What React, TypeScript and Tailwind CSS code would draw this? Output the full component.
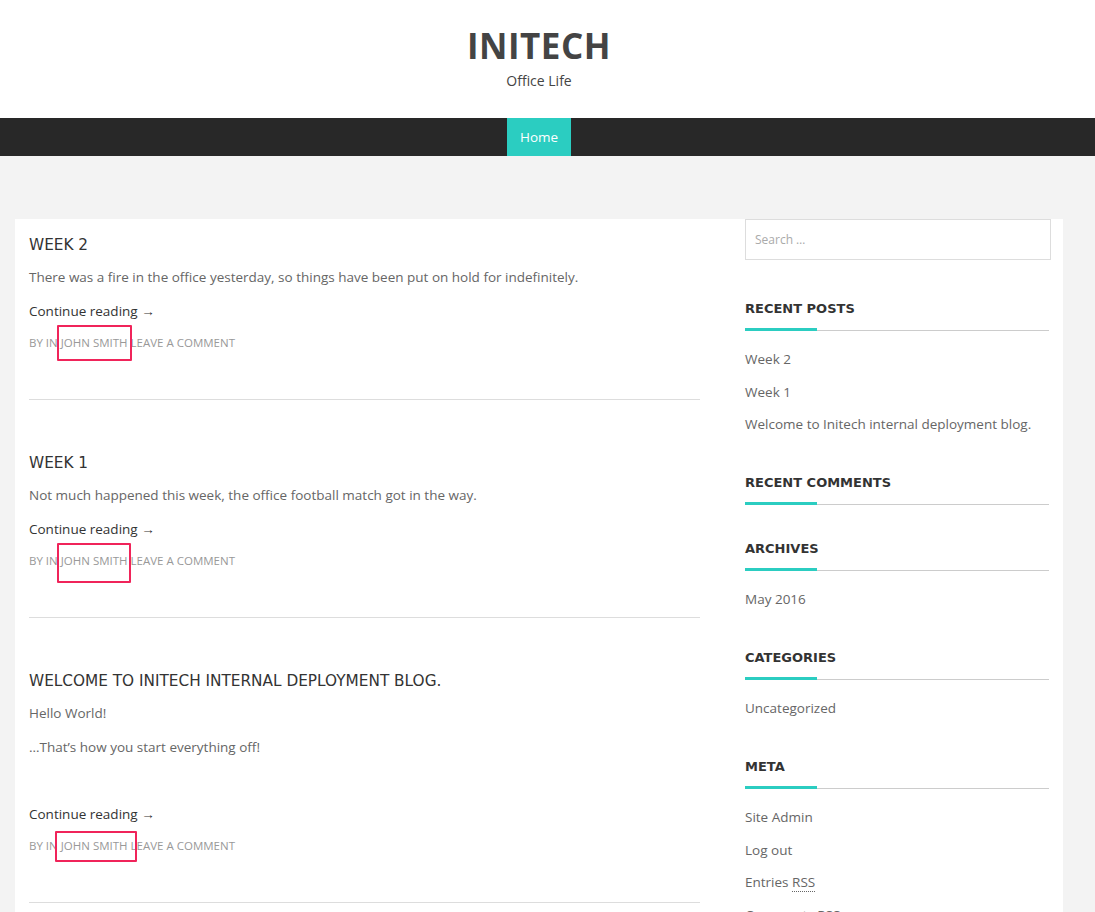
import React from "react"

const body = "font-['Open_Sans',sans-serif]"
const head = "font-['DejaVu_Sans',sans-serif]"

type Post = { title: string; paras: string[]; box: string; extra?: boolean }

const posts: Post[] = [
  { title: "Week 2", paras: ["There was a fire in the office yesterday, so things have been put on hold for indefinitely."], box: "-left-[4px] -right-[4px] -top-[10px] -bottom-[11px]" },
  { title: "Week 1", paras: ["Not much happened this week, the office football match got in the way."], box: "-left-[4px] -right-[3px] -top-[10px] -bottom-[15px]" },
  { title: "Welcome to Initech internal deployment blog.", paras: ["Hello World!", "…That’s how you start everything off!"], box: "-left-[6px] -right-[9px] -top-[7px] -bottom-[9px]", extra: true },
]

function PostItem({ post }: { post: Post }) {
  return (
    <article className="pt-[17px] first:pt-[16px]">
      <h2 className={`${head} text-[15.3px] leading-[20px] uppercase text-[#333]`}>{post.title}</h2>
      <div className="mt-[12px] flex flex-col gap-[14px]">
        {post.paras.map((p) => (
          <p key={p} className="text-[13.5px] leading-[20px] text-[#666]">{p}</p>
        ))}
      </div>
      <a className={`block text-[13.5px] leading-[20px] text-[#333] ${post.extra ? "mt-[47px]" : "mt-[14px]"}`}>Continue reading →</a>
      <div className="mt-[12px] text-[11.5px] leading-[20px] uppercase text-[#999]">
        By In{" "}
        <span className="relative">
          JOHN SMITH
          <span className={`absolute ${post.box} border-2 border-[#f0245a] rounded-[1px]`} />
        </span>
        <span> Leave a comment</span>
      </div>
      <hr className="mt-[46px] mb-[36px] border-t border-[#ddd]" />
    </article>
  )
}

function Widget({ title, items }: { title: string; items: React.ReactNode[] }) {
  return (
    <section className="mt-[34px]">
      <h3 className={`${head} font-bold text-[13px] leading-[20px] text-[#333]`}>{title}</h3>
      <div className="mt-[9px] relative h-[3px] w-[304px]">
        <div className="absolute bottom-0 left-0 right-0 h-px bg-[#ccc]" />
        <div className="absolute top-0 left-0 w-[72px] h-[3px] bg-[#2bcdc1]" />
      </div>
      {items.length > 0 && (
        <ul className="mt-[18px] pb-[5px] flex flex-col gap-[12.5px]">
          {items.map((it, i) => (
            <li key={i} className="text-[13.5px] leading-[20px] text-[#666]">{it}</li>
          ))}
        </ul>
      )}
    </section>
  )
}

export default function App() {
  return (
    <div className={`${body} min-h-[912px] bg-[#f3f3f3] overflow-hidden`}>
      <header className="bg-white h-[118px]">
        <div className="w-[1078px] flex flex-col items-center pt-[22px]">
          <h1 className="text-[35px] leading-[48px] font-bold text-[#444] tracking-[0.5px]">INITECH</h1>
          <p className="text-[14px] leading-[20px] text-[#444] mt-[1px]">Office Life</p>
        </div>
      </header>
      <nav className="bg-[#282828] h-[38px]">
        <div className="w-[1078px] flex justify-center">
          <a className="bg-[#2bcdc1] text-white text-[13.5px] h-[38px] w-[64px] flex items-center justify-center">Home</a>
        </div>
      </nav>
      <div className="pt-[63px] pl-[15px]">
        <div className="bg-white w-[1048px] flex">
          <main className="w-[685px] pl-[14px]">
            {posts.map((p) => (
              <PostItem key={p.title} post={p} />
            ))}
          </main>
          <aside className="ml-[45px] w-[306px]">
            <div className="h-[41px] border border-[#ddd] flex items-center px-[9px] text-[12px] text-[#aaa]">Search …</div>
            <div className="h-[5px]" />
            <Widget title="RECENT POSTS" items={["Week 2", "Week 1", "Welcome to Initech internal deployment blog."]} />
            <Widget title="RECENT COMMENTS" items={[]} />
            <Widget title="ARCHIVES" items={["May 2016"]} />
            <Widget title="CATEGORIES" items={["Uncategorized"]} />
            <Widget
              title="META"
              items={[
                "Site Admin",
                "Log out",
                <span>Entries <abbr className="no-underline border-b border-dotted border-[#666]">RSS</abbr></span>,
                <span>Comments <abbr className="no-underline border-b border-dotted border-[#666]">RSS</abbr></span>,
                "WordPress.org",
              ]}
            />
          </aside>
        </div>
      </div>
    </div>
  )
}
